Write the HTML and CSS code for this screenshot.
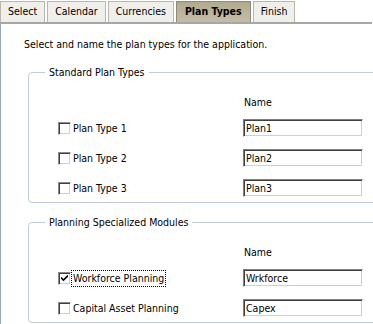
FILE: index.html
```html
<!DOCTYPE html>
<html lang="en">
  <head>
    <meta charset="UTF-8" />
    <title>Plan Types</title>
    <link rel="stylesheet" href="styles.css">
  </head>
  <body>
    <div class="tabs">
      <div class="tab">Select</div>
      <div class="tab">Calendar</div>
      <div class="tab">Currencies</div>
      <div class="tab active">Plan Types</div>
      <div class="tab">Finish</div>
    </div>

    <div class="panel">
      <p class="intro">Select and name the plan types for the application.</p>

      <fieldset class="group">
        <legend>Standard Plan Types</legend>
        <div class="rows">
          <span></span><span class="head">Name</span>
          <label class="opt"><span class="box"></span><span class="txt">Plan Type 1</span></label>
          <span class="field">Plan1</span>
          <label class="opt"><span class="box"></span><span class="txt">Plan Type 2</span></label>
          <span class="field">Plan2</span>
          <label class="opt"><span class="box"></span><span class="txt">Plan Type 3</span></label>
          <span class="field">Plan3</span>
        </div>
      </fieldset>

      <fieldset class="group">
        <legend>Planning Specialized Modules</legend>
        <div class="rows">
          <span></span><span class="head">Name</span>
          <label class="opt">
            <span class="box">
              <svg width="7" height="7" viewBox="0 0 7 7"><path d="M0 2.5 L2.5 5 L7 0.5" fill="none" stroke="#000" stroke-width="1.6"/></svg>
            </span>
            <span class="txt focus">Workforce Planning</span>
          </label>
          <span class="field">Wrkforce</span>
          <label class="opt"><span class="box"></span><span class="txt">Capital Asset Planning</span></label>
          <span class="field">Capex</span>
        </div>
      </fieldset>
    </div>
  </body>
</html>
```

FILE: styles.css
```css
body {
  margin: 0;
  width: 373px;
  height: 324px;
  overflow: hidden;
  background-color: #fff;
  font-family: "DejaVu Sans Condensed", "DejaVu Sans", sans-serif;
  font-size: 10.5px;
  line-height: 13px;
  color: #000;
}
.tabs {
  display: flex;
  gap: 2px;
  height: 21px;
  padding-top: 1px;
  margin-right: 1px;
  border-bottom: 2px solid #a7a7a7;
}
.tab {
  padding: 3px 7px 0;
  background-color: #f1efe9;
  border: 1px solid #b8b6ad;
  border-bottom: none;
}
.tab.active {
  padding: 3px 8px 0;
  font-weight: bold;
  background: linear-gradient(#b3aa8d, #c4bda6);
  border-color: #8e8a7c;
}
.panel {
  border-left: 1px solid #99a8bd;
  padding-top: 14px;
  height: 300px;
  overflow: hidden;
}
.intro {
  margin: 0 0 15px 23px;
}
.group {
  margin: 0 -20px 13px 27px;
  padding: 0 0 5px 0;
  border: 1px solid #c2cbd8;
  border-radius: 4px;
}
.group legend {
  margin-left: 16px;
  padding: 0 4px;
}
.rows {
  display: grid;
  grid-template-columns: 185px 120px;
  row-gap: 12px;
  align-items: center;
  margin-top: 17px;
  padding-left: 29px;
}
.rows .head {
  padding-left: 1px;
  margin-bottom: -2px;
}
.opt {
  display: flex;
  align-items: center;
}
.box {
  width: 11px;
  height: 11px;
  border: 1px solid;
  border-color: #8a8a8a #fff #fff #8a8a8a;
  box-shadow: inset 1px 1px #404040, inset -1px -1px #d4d0c8;
  background-color: #fff;
  display: flex;
  align-items: center;
  justify-content: center;
}
.box svg {
  margin-top: 1px;
}
.txt {
  padding: 1px;
  border: 1px dotted transparent;
}
.txt.focus {
  border-color: #000;
}
.field {
  height: 16px;
  line-height: 16px;
  padding-left: 2px;
  border: 1px solid;
  border-color: #7f7f7f #fff #fff #7f7f7f;
  box-shadow: inset 1px 1px #404040, inset -1px -1px #d4d0c8;
}
```
